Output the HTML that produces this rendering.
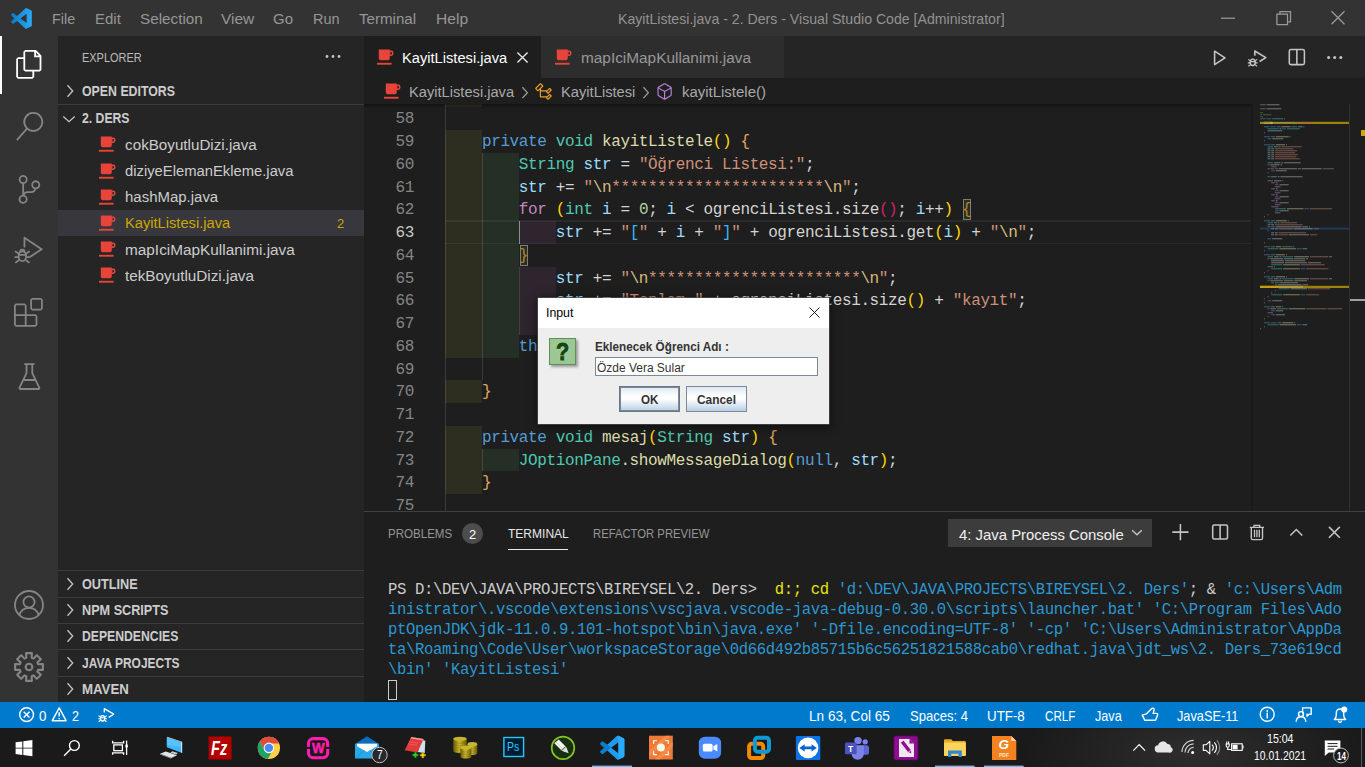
<!DOCTYPE html>
<html lang="tr"><head><meta charset="utf-8"><title>KayitListesi.java - 2. Ders - Visual Studio Code</title>
<style>

html,body{margin:0;padding:0}
body{width:1365px;height:767px;overflow:hidden;background:#1e1e1e;position:relative;font-family:"Liberation Sans",sans-serif}
.t{position:absolute;white-space:pre;transform-origin:0 50%;display:block}
.a{position:absolute}
svg{position:absolute;overflow:visible}
.ln{position:absolute;left:364px;width:888px;height:22.75px}
.c{position:absolute;white-space:pre;font:16px/22.75px "Liberation Mono",monospace;letter-spacing:-0.3716px;color:#d4d4d4;left:445px;margin-top:1px}
.n{position:absolute;white-space:pre;font:16px/22.75px "Liberation Mono",monospace;letter-spacing:-0.3716px;color:#858585;left:388px;width:27.7px;text-align:right;margin-top:1px}
.k{color:#569cd6}.ty{color:#4ec9b0}.f{color:#dcdcaa}.v{color:#9cdcfe}.s{color:#ce9178}.e{color:#d7ba7d}.nu{color:#b5cea8}.kc{color:#c586c0}
.b1{color:#ffd700}.b2{color:#e2a55b}.b3{color:#d0246c}.b4{color:#3cb4f0}.b5{color:#c07c22}
.tm{position:absolute;left:388px;white-space:pre;font:15.6px/20px "Liberation Mono",monospace;letter-spacing:-0.3616px;color:#cccccc}
.tb{color:#2b98d2}.ty2{color:#e5e510}

</style></head>
<body>
<div style="position:absolute;left:0px;top:0px;width:1365px;height:36px;background:#333333;"></div>
<div style="position:absolute;left:0px;top:36px;width:58px;height:666px;background:#333333;"></div>
<div style="position:absolute;left:58px;top:36px;width:306px;height:666px;background:#252526;"></div>
<div style="position:absolute;left:364px;top:36px;width:1001px;height:42px;background:#252526;"></div>
<div style="position:absolute;left:364px;top:36px;width:177.3px;height:42px;background:#1e1e1e;"></div>
<div style="position:absolute;left:541.3px;top:36px;width:243.2px;height:42px;background:#2d2d2d;"></div>
<div style="position:absolute;left:364px;top:78px;width:1001px;height:26px;background:#1e1e1e;"></div>
<div style="position:absolute;left:364px;top:104px;width:1001px;height:407.5px;background:#1e1e1e;"></div>
<div style="position:absolute;left:364px;top:511px;width:1001px;height:191px;background:#1e1e1e;"></div>
<div style="position:absolute;left:364px;top:511px;width:1001px;height:1px;background:#414141;"></div>
<div style="position:absolute;left:0px;top:702px;width:1365px;height:26px;background:#007acc;"></div>
<div style="position:absolute;left:0px;top:728px;width:1365px;height:39px;background:#1a1a1a;background-image:radial-gradient(ellipse 170px 70px at 1195px 24px,rgba(255,255,255,.085),rgba(255,255,255,0) 100%)"></div>
<svg style="left:10.5px;top:7.6px" width="20.8" height="20.8" viewBox="0 0 100 100" ><defs><linearGradient id="vg" x1="0" y1="0" x2="1" y2="0"><stop offset="0" stop-color="#0a7bc8"/><stop offset="1" stop-color="#2aaaf5"/></linearGradient></defs><path fill="url(#vg)" fill-rule="evenodd" d="M70.9 99.3c1.6.6 3.4.6 5-.2l20.6-9.9c2.1-1 3.5-3.2 3.5-5.6V16.4c0-2.4-1.4-4.6-3.5-5.6L75.9.9c-2.1-1-4.5-.8-6.4.6-.3.2-.5.4-.7.6L29.4 38 12.2 25c-1.6-1.2-3.8-1.1-5.3.2l-5.5 5c-1.8 1.7-1.8 4.5 0 6.2L16.2 50 1.4 63.600c-1.8 1.600-1.800 4.500 0 6.100l5.500 5c1.500 1.400 3.700 1.500 5.300.300L29.400 62l39.400 36c.6.600 1.400 1.100 2.100 1.400zM75 27.300 45.100 50 75 72.700V27.300z"/></svg>
<svg style="left:1215px;top:5px" width="140" height="26" viewBox="1215 5 140 26" ><g fill="none" stroke="#9a9a9a" stroke-width="1.25"><path d="M1221 18.2h14"/><path d="M1276.9 14.2h10.6v10.3h-10.6z"/><path d="M1279.9 14.2v-2.700h10.600v10.300h-3"/><path d="M1331.500 11.200l13 13M1344.500 11.200l-13 13"/></g></svg>
<div style="position:absolute;left:0px;top:36px;width:2.4px;height:57.6px;background:#ffffff;"></div>
<svg style="left:15.0px;top:50.3px" width="28.8" height="28.8" viewBox="0 0 24 24" ><path fill="#ffffff" d="M17.5 0h-9L7 1.5V6H2.500L1 7.500v15.070L2.500 24h12.070L16 22.570V18h4.700l1.300-1.430V4.500L17.500 0zm0 2.120l2.380 2.380H17.500V2.120zm-3 20.380h-12v-15H7v9.070L8.500 18h6v4.500zm6-6h-12v-15H16V6h4.500v10.500z"/></svg>
<svg style="left:14.5px;top:112.0px" width="28.8" height="28.8" viewBox="0 0 24 24" ><path fill="#858585" d="M15.250 0a8.250 8.250 0 0 0-6.180 13.720L1 22.880l1.120 1 8.050-9.120A8.251 8.251 0 1 0 15.250.010V0zm0 15a6.750 6.750 0 1 1 0-13.500 6.750 6.750 0 0 1 0 13.500z"/></svg>
<svg style="left:14.6px;top:175.0px" width="28.8" height="28.8" viewBox="0 0 24 24" ><path fill="#858585" d="M21.007 8.222A3.738 3.738 0 0 0 15.045 5.200a3.737 3.737 0 0 0 1.156 6.583 2.988 2.988 0 0 1-2.668 1.670h-2.990a4.456 4.456 0 0 0-2.989 1.165V7.400a3.737 3.737 0 1 0-1.494 0v9.117a3.776 3.776 0 1 0 1.816.099 2.990 2.990 0 0 1 2.668-1.667h2.990a4.484 4.484 0 0 0 4.223-3.039 3.736 3.736 0 0 0 3.250-3.687zM4.565 3.738a2.242 2.242 0 1 1 4.484 0 2.242 2.242 0 0 1-4.484 0zm4.484 16.441a2.242 2.242 0 1 1-4.484 0 2.242 2.242 0 0 1 4.484 0zm8.221-9.715a2.242 2.242 0 1 1 0-4.485 2.242 2.242 0 0 1 0 4.485z"/></svg>
<svg style="left:14.4px;top:234.6px" width="29.5" height="29.5" viewBox="0 0 24 24" ><g fill="none" stroke="#858585" stroke-width="1.45" stroke-linejoin="round" stroke-linecap="round"><path d="M8.500 9.500V2.200L22.500 11.500 13.500 17.500"/><ellipse cx="6.800" cy="17.300" rx="3.100" ry="3.900"/><path d="M3.900 16.200h5.800M1.300 13.500l2.600 1.800M12.300 13.500l-2.600 1.800M1 18h2.700M12.600 18H9.900M1.500 22.300l2.600-1.900M12.100 22.300l-2.600-1.900M5 13.700a1.800 1.800 0 0 1 3.600 0"/></g></svg>
<svg style="left:14.3px;top:298.2px" width="28.8" height="28.8" viewBox="0 0 24 24" ><path fill="#858585" d="M13.500 1.500L15 0h7.500L24 1.500V9l-1.500 1.500H15L13.500 9V1.500zm1.500 0V9h7.500V1.500H15zM0 15V6l1.500-1.500H9L10.500 6v7.500H18l1.500 1.500v7.500L18 24H1.500L0 22.500V15zm9-1.500V6H1.500v7.500H9zM9 15H1.500v7.500H9V15zm1.500 7.500H18V15h-7.500v7.500z"/></svg>
<svg style="left:14.6px;top:361.6px" width="28.8" height="28.8" viewBox="0 0 24 24" ><g fill="none" stroke="#858585" stroke-width="1.5" stroke-linejoin="round"><path d="M7.700 1.700h8.600M9.600 1.700v7.600L3.800 21.300a.8.800 0 0 0 .7 1.200h15a.8.800 0 0 0 .7-1.200L14.400 9.300V1.700M6.900 15h10.200"/></g></svg>
<svg style="left:14px;top:590px" width="30" height="30" viewBox="0 0 30 30" ><g fill="none" stroke="#858585" stroke-width="1.800"><circle cx="15" cy="15" r="14"/><circle cx="15" cy="12" r="5.600"/><path d="M5.400 25.200c1.300-4.600 4.900-7.400 9.600-7.400s8.300 2.800 9.600 7.400"/></g></svg>
<svg style="left:14px;top:652px" width="30" height="30" viewBox="0 0 30 30" ><g fill="none" stroke="#858585" stroke-width="2.100" stroke-linejoin="round"><path d="M12.32 5.78 L12.12 1.10 L17.88 1.10 L17.68 5.78 L19.62 6.59 L22.80 3.13 L26.87 7.20 L23.41 10.38 L24.22 12.32 L28.90 12.12 L28.90 17.88 L24.22 17.68 L23.41 19.62 L26.87 22.80 L22.80 26.87 L19.62 23.41 L17.68 24.22 L17.88 28.90 L12.12 28.90 L12.32 24.22 L10.38 23.41 L7.20 26.87 L3.13 22.80 L6.59 19.62 L5.78 17.68 L1.10 17.88 L1.10 12.12 L5.78 12.32 L6.59 10.38 L3.13 7.20 L7.20 3.13 L10.38 6.59Z"/><circle cx="15" cy="15" r="3.300"/></g></svg>
<svg style="left:325px;top:54px" width="16" height="5" viewBox="0 0 16 5" ><g fill="#c5c5c5"><circle cx="2" cy="2.500" r="1.400"/><circle cx="8" cy="2.500" r="1.400"/><circle cx="14" cy="2.500" r="1.400"/></g></svg>
<svg style="left:66.3px;top:84.0px" width="8.0" height="14.0" viewBox="0 0 8 14" ><path fill="none" stroke="#c5c5c5" stroke-width="1.3" d="M1.500 1.300L6.700 7 1.500 12.700"/></svg>
<div style="position:absolute;left:58px;top:104.4px;width:306px;height:1px;background:#3c3c3c;"></div>
<svg style="left:62.3px;top:114.6px" width="14.0" height="8.0" viewBox="0 0 14 8" ><path fill="none" stroke="#c5c5c5" stroke-width="1.3" d="M1.300 1.500L7 6.700 12.700 1.500"/></svg>
<div style="position:absolute;left:58px;top:210px;width:306px;height:26px;background:#37373d;"></div>
<svg style="left:99.4px;top:136.4px" width="16.5" height="16.2" viewBox="0 0 16.500 16.200" ><g fill="#e8443a"><path d="M1.800 0.500h11v8.200a2.600 2.600 0 0 1-2.600 2.600H4.400a2.600 2.600 0 0 1-2.600-2.600z"/><path fill-rule="evenodd" d="M12.300 1.600h1.900a2.300 2.300 0 0 1 2.300 2.300v.7a2.300 2.300 0 0 1-2.300 2.300h-1.900zM13.400 3v2.500h.6a1 1 0 0 0 1-1V4a1 1 0 0 0-1-1z"/><rect x="0" y="13.800" width="14.600" height="1.900"/></g></svg>
<svg style="left:99.4px;top:162.50000000000003px" width="16.5" height="16.2" viewBox="0 0 16.500 16.200" ><g fill="#e8443a"><path d="M1.800 0.500h11v8.200a2.600 2.600 0 0 1-2.600 2.600H4.400a2.600 2.600 0 0 1-2.600-2.600z"/><path fill-rule="evenodd" d="M12.300 1.600h1.900a2.300 2.300 0 0 1 2.300 2.300v.7a2.300 2.300 0 0 1-2.300 2.300h-1.900zM13.400 3v2.500h.6a1 1 0 0 0 1-1V4a1 1 0 0 0-1-1z"/><rect x="0" y="13.800" width="14.600" height="1.900"/></g></svg>
<svg style="left:99.4px;top:188.70000000000002px" width="16.5" height="16.2" viewBox="0 0 16.500 16.200" ><g fill="#e8443a"><path d="M1.800 0.500h11v8.200a2.600 2.600 0 0 1-2.600 2.600H4.400a2.600 2.600 0 0 1-2.600-2.600z"/><path fill-rule="evenodd" d="M12.300 1.600h1.900a2.300 2.300 0 0 1 2.300 2.300v.7a2.300 2.300 0 0 1-2.300 2.300h-1.900zM13.400 3v2.500h.6a1 1 0 0 0 1-1V4a1 1 0 0 0-1-1z"/><rect x="0" y="13.800" width="14.600" height="1.900"/></g></svg>
<svg style="left:99.4px;top:214.9px" width="16.5" height="16.2" viewBox="0 0 16.500 16.200" ><g fill="#e8443a"><path d="M1.800 0.500h11v8.200a2.600 2.600 0 0 1-2.600 2.600H4.400a2.600 2.600 0 0 1-2.600-2.600z"/><path fill-rule="evenodd" d="M12.300 1.600h1.900a2.300 2.300 0 0 1 2.300 2.300v.7a2.300 2.300 0 0 1-2.300 2.300h-1.900zM13.400 3v2.500h.6a1 1 0 0 0 1-1V4a1 1 0 0 0-1-1z"/><rect x="0" y="13.800" width="14.600" height="1.900"/></g></svg>
<svg style="left:99.4px;top:241.10000000000002px" width="16.5" height="16.2" viewBox="0 0 16.500 16.200" ><g fill="#e8443a"><path d="M1.800 0.500h11v8.200a2.600 2.600 0 0 1-2.600 2.600H4.400a2.600 2.600 0 0 1-2.600-2.600z"/><path fill-rule="evenodd" d="M12.300 1.600h1.900a2.300 2.300 0 0 1 2.300 2.300v.7a2.300 2.300 0 0 1-2.300 2.300h-1.900zM13.400 3v2.500h.6a1 1 0 0 0 1-1V4a1 1 0 0 0-1-1z"/><rect x="0" y="13.800" width="14.600" height="1.900"/></g></svg>
<svg style="left:99.4px;top:267.4px" width="16.5" height="16.2" viewBox="0 0 16.500 16.200" ><g fill="#e8443a"><path d="M1.800 0.500h11v8.200a2.600 2.600 0 0 1-2.600 2.600H4.400a2.600 2.600 0 0 1-2.600-2.600z"/><path fill-rule="evenodd" d="M12.300 1.600h1.900a2.300 2.300 0 0 1 2.300 2.300v.7a2.300 2.300 0 0 1-2.300 2.300h-1.900zM13.400 3v2.500h.6a1 1 0 0 0 1-1V4a1 1 0 0 0-1-1z"/><rect x="0" y="13.800" width="14.600" height="1.900"/></g></svg>
<div style="position:absolute;left:58px;top:570.2px;width:306px;height:1px;background:#3c3c3c;"></div>
<svg style="left:66.3px;top:576.6px" width="8.0" height="14.0" viewBox="0 0 8 14" ><path fill="none" stroke="#c5c5c5" stroke-width="1.3" d="M1.500 1.300L6.700 7 1.500 12.700"/></svg>
<div style="position:absolute;left:58px;top:596.6px;width:306px;height:1px;background:#3c3c3c;"></div>
<svg style="left:66.3px;top:603.0px" width="8.0" height="14.0" viewBox="0 0 8 14" ><path fill="none" stroke="#c5c5c5" stroke-width="1.3" d="M1.500 1.300L6.700 7 1.500 12.700"/></svg>
<div style="position:absolute;left:58px;top:623.0px;width:306px;height:1px;background:#3c3c3c;"></div>
<svg style="left:66.3px;top:629.4px" width="8.0" height="14.0" viewBox="0 0 8 14" ><path fill="none" stroke="#c5c5c5" stroke-width="1.3" d="M1.500 1.300L6.700 7 1.500 12.700"/></svg>
<div style="position:absolute;left:58px;top:649.4000000000001px;width:306px;height:1px;background:#3c3c3c;"></div>
<svg style="left:66.3px;top:655.8000000000001px" width="8.0" height="14.0" viewBox="0 0 8 14" ><path fill="none" stroke="#c5c5c5" stroke-width="1.3" d="M1.500 1.300L6.700 7 1.500 12.700"/></svg>
<div style="position:absolute;left:58px;top:675.8000000000001px;width:306px;height:1px;background:#3c3c3c;"></div>
<svg style="left:66.3px;top:682.2px" width="8.0" height="14.0" viewBox="0 0 8 14" ><path fill="none" stroke="#c5c5c5" stroke-width="1.3" d="M1.500 1.300L6.700 7 1.500 12.700"/></svg>
<svg style="left:377.3px;top:48.8px" width="16.5" height="16.2" viewBox="0 0 16.500 16.200" ><g fill="#e8443a"><path d="M1.800 0.500h11v8.200a2.600 2.600 0 0 1-2.600 2.600H4.400a2.600 2.600 0 0 1-2.600-2.600z"/><path fill-rule="evenodd" d="M12.300 1.600h1.900a2.300 2.300 0 0 1 2.300 2.300v.7a2.300 2.300 0 0 1-2.300 2.300h-1.900zM13.400 3v2.500h.6a1 1 0 0 0 1-1V4a1 1 0 0 0-1-1z"/><rect x="0" y="13.800" width="14.600" height="1.900"/></g></svg>
<svg style="left:516.8px;top:51.6px" width="11" height="11" viewBox="0 0 11 11" ><path fill="none" stroke="#e8e8e8" stroke-width="1.35" d="M0.400 0.400l10.200 10.200M10.600 0.400L0.400 10.600"/></svg>
<svg style="left:555px;top:48.8px" width="16.5" height="16.2" viewBox="0 0 16.500 16.200" ><g fill="#e8443a"><path d="M1.800 0.500h11v8.200a2.600 2.600 0 0 1-2.600 2.600H4.400a2.600 2.600 0 0 1-2.600-2.600z"/><path fill-rule="evenodd" d="M12.300 1.600h1.900a2.300 2.300 0 0 1 2.300 2.300v.7a2.300 2.300 0 0 1-2.300 2.300h-1.900zM13.400 3v2.500h.6a1 1 0 0 0 1-1V4a1 1 0 0 0-1-1z"/><rect x="0" y="13.800" width="14.600" height="1.900"/></g></svg>
<svg style="left:1210px;top:46px" width="140" height="24" viewBox="1210 46 140 24" ><g fill="none" stroke="#c5c5c5" stroke-width="1.550" stroke-linejoin="round"><path d="M1214.600 51.200v13.400l10.400-6.700z"/><path d="M1254.800 55.800v-4.800l11 6.600-6.200 3.900"/><ellipse cx="1252.700" cy="62.300" rx="2.500" ry="3.200" stroke-width="1.400"/><path stroke-width="1.150" d="M1250.200 61.600h5M1248.200 59.400l2.100 1.500M1257.200 59.400l-2.100 1.500M1247.800 62.800h2.500M1257.600 62.800h-2.500M1248.300 66.200l2.200-1.600M1257.100 66.200l-2.200-1.600"/><rect x="1289.300" y="49.500" width="15.100" height="15.100" rx="1.700"/><path d="M1296.850 49.500v15.100"/></g><g fill="#c5c5c5"><circle cx="1328.600" cy="57.600" r="1.500"/><circle cx="1334.700" cy="57.600" r="1.500"/><circle cx="1340.800" cy="57.600" r="1.500"/></g></svg>
<svg style="left:384px;top:83.39999999999999px" width="16.5" height="16.2" viewBox="0 0 16.500 16.200" ><g fill="#e8443a"><path d="M1.800 0.500h11v8.200a2.600 2.600 0 0 1-2.600 2.600H4.400a2.600 2.600 0 0 1-2.600-2.600z"/><path fill-rule="evenodd" d="M12.300 1.600h1.900a2.300 2.300 0 0 1 2.300 2.300v.7a2.300 2.300 0 0 1-2.300 2.300h-1.900zM13.400 3v2.500h.6a1 1 0 0 0 1-1V4a1 1 0 0 0-1-1z"/><rect x="0" y="13.800" width="14.600" height="1.900"/></g></svg>
<svg style="left:521.0px;top:85.55px" width="7.6" height="13.299999999999999" viewBox="0 0 8 14" ><path fill="none" stroke="#a0a0a0" stroke-width="1.3" d="M1.500 1.300L6.700 7 1.500 12.700"/></svg>
<svg style="left:534.0px;top:81.6px" width="19.2" height="19.2" viewBox="0 0 16 16" ><path fill="#ee9d28" d="M11.340 9.710h.710l2.670-2.670v-.710L13.380 5h-.700l-1.820 1.810h-5V5.560l1.860-1.850V3l-2-2H5L1 5v.710l2 2h.710l1.140-1.150v5.790l.500.500H10v.520l1.330 1.340h.710l2.670-2.670v-.710L13.370 10h-.700l-1.860 1.850h-5v-4H10v.480l1.340 1.380zm1.690-3.650l.630.630-2 2-.630-.630 2-2zm0 5l.630.630-2 2-.630-.630 2-2zM3.350 6.650l-1.290-1.290 3.290-3.300 1.300 1.290-3.300 3.300z"/></svg>
<svg style="left:641.6px;top:85.55px" width="7.6" height="13.299999999999999" viewBox="0 0 8 14" ><path fill="none" stroke="#a0a0a0" stroke-width="1.3" d="M1.500 1.300L6.700 7 1.500 12.700"/></svg>
<svg style="left:655.0px;top:81.8px" width="19.2" height="19.2" viewBox="0 0 16 16" ><path fill="#b180d7" d="M13.510 4l-5-3h-1l-5 3-.490.860v6l.490.850 5 3h1l5-3 .490-.850v-6L13.510 4zm-6 9.560l-4.500-2.700V5.700l4.500 2.450v5.410zM3.270 4.700l4.740-2.840 4.740 2.840-4.740 2.590L3.270 4.700zm9.740 6.160l-4.500 2.700V8.150l4.500-2.450v5.160z"/></svg>
<div class="a" style="left:364px;top:104px;width:1001px;height:407px;overflow:hidden">
<div class="a" style="left:81.00px;top:-19.50px;width:37.22px;height:22.95px;background:#2e2e20;"></div>
<div class="a" style="left:81.00px;top:26.00px;width:37.22px;height:22.95px;background:#2e2e20;"></div>
<div class="a" style="left:81.00px;top:48.75px;width:37.22px;height:22.95px;background:#2e2e20;"></div>
<div class="a" style="left:117.92px;top:48.75px;width:37.22px;height:22.95px;background:#252f26;"></div>
<div class="a" style="left:81.00px;top:71.50px;width:37.22px;height:22.95px;background:#2e2e20;"></div>
<div class="a" style="left:117.92px;top:71.50px;width:37.22px;height:22.95px;background:#252f26;"></div>
<div class="a" style="left:81.00px;top:94.25px;width:37.22px;height:22.95px;background:#2e2e20;"></div>
<div class="a" style="left:117.92px;top:94.25px;width:37.22px;height:22.95px;background:#252f26;"></div>
<div class="a" style="left:81.00px;top:117.00px;width:37.22px;height:22.95px;background:#2e2e20;"></div>
<div class="a" style="left:117.92px;top:117.00px;width:37.22px;height:22.95px;background:#252f26;"></div>
<div class="a" style="left:154.84px;top:117.00px;width:37.22px;height:22.95px;background:#2e252e;"></div>
<div class="a" style="left:81.00px;top:139.75px;width:37.22px;height:22.95px;background:#2e2e20;"></div>
<div class="a" style="left:117.92px;top:139.75px;width:37.22px;height:22.95px;background:#252f26;"></div>
<div class="a" style="left:81.00px;top:162.50px;width:37.22px;height:22.95px;background:#2e2e20;"></div>
<div class="a" style="left:117.92px;top:162.50px;width:37.22px;height:22.95px;background:#252f26;"></div>
<div class="a" style="left:154.84px;top:162.50px;width:37.22px;height:22.95px;background:#2e252e;"></div>
<div class="a" style="left:81.00px;top:185.25px;width:37.22px;height:22.95px;background:#2e2e20;"></div>
<div class="a" style="left:117.92px;top:185.25px;width:37.22px;height:22.95px;background:#252f26;"></div>
<div class="a" style="left:154.84px;top:185.25px;width:37.22px;height:22.95px;background:#2e252e;"></div>
<div class="a" style="left:81.00px;top:208.00px;width:37.22px;height:22.95px;background:#2e2e20;"></div>
<div class="a" style="left:117.92px;top:208.00px;width:37.22px;height:22.95px;background:#252f26;"></div>
<div class="a" style="left:154.84px;top:208.00px;width:37.22px;height:22.95px;background:#2e252e;"></div>
<div class="a" style="left:81.00px;top:230.75px;width:37.22px;height:22.95px;background:#2e2e20;"></div>
<div class="a" style="left:117.92px;top:230.75px;width:37.22px;height:22.95px;background:#252f26;"></div>
<div class="a" style="left:81.00px;top:276.25px;width:37.22px;height:22.95px;background:#2e2e20;"></div>
<div class="a" style="left:81.00px;top:321.75px;width:37.22px;height:22.95px;background:#2e2e20;"></div>
<div class="a" style="left:81.00px;top:344.50px;width:37.22px;height:22.95px;background:#2e2e20;"></div>
<div class="a" style="left:117.92px;top:344.50px;width:37.22px;height:22.95px;background:#252f26;"></div>
<div class="a" style="left:81.00px;top:367.25px;width:37.22px;height:22.95px;background:#2e2e20;"></div>
<div class="a" style="left:81.00px;top:0.00px;width:1.00px;height:407.00px;background:rgba(255,255,255,.13);"></div>
<div class="a" style="left:118.00px;top:48.75px;width:1.00px;height:227.50px;background:rgba(255,255,255,.13);"></div>
<div class="a" style="left:118.00px;top:344.50px;width:1.00px;height:22.75px;background:rgba(255,255,255,.13);"></div>
<div class="a" style="left:155.00px;top:117.00px;width:1.20px;height:22.75px;background:#8c8c8c;"></div>
<div class="a" style="left:155.00px;top:162.50px;width:1.00px;height:68.25px;background:rgba(255,255,255,.11);"></div>
<div class="a" style="left:81.00px;top:116.30px;width:807.00px;height:1.30px;background:rgba(255,255,255,.055);"></div>
<div class="a" style="left:81.00px;top:139.05px;width:807.00px;height:1.30px;background:rgba(255,255,255,.055);"></div>
<div class="a" style="left:598.88px;top:95.05px;width:8.23px;height:21.15px;background:#24331f;box-shadow:inset 0 0 0 1px #7d7d7d"></div>
<div class="a" style="left:155.84px;top:140.55px;width:8.23px;height:21.15px;background:#24331f;box-shadow:inset 0 0 0 1px #7d7d7d"></div>
<div class="n" style="left:22.3px;top:3.25px">58</div>
<div class="n" style="left:22.3px;top:26.00px">59</div>
<div class="c" style="left:81px;top:26.00px">    <span class="k">private</span> <span class="ty">void</span> <span class="f">kayitListele</span><span class="b1">()</span> <span class="b2">{</span></div>
<div class="n" style="left:22.3px;top:48.75px">60</div>
<div class="c" style="left:81px;top:48.75px">        <span class="ty">String</span> <span class="v">str</span> = <span class="s">"Öğrenci Listesi:"</span>;</div>
<div class="n" style="left:22.3px;top:71.50px">61</div>
<div class="c" style="left:81px;top:71.50px">        <span class="v">str</span> += <span class="s">"</span><span class="e">\n</span><span class="s">***********************</span><span class="e">\n</span><span class="s">"</span>;</div>
<div class="n" style="left:22.3px;top:94.25px">62</div>
<div class="c" style="left:81px;top:94.25px">        <span class="kc">for</span> <span class="b1">(</span><span class="ty">int</span> <span class="v">i</span> = <span class="nu">0</span>; <span class="v">i</span> &lt; ogrenciListesi.size<span class="b3">()</span>; <span class="v">i</span>++<span class="b1">)</span> <span class="b5">{</span></div>
<div class="n" style="left:22.3px;top:117.00px;color:#c6c6c6">63</div>
<div class="c" style="left:81px;top:117.00px">            <span class="v">str</span> += <span class="s">"</span><span class="b4">[</span><span class="s">"</span> + <span class="v">i</span> + <span class="s">"</span><span class="b4">]</span><span class="s">"</span> + ogrenciListesi.get<span class="b1">(</span><span class="v">i</span><span class="b1">)</span> + <span class="s">"</span><span class="e">\n</span><span class="s">"</span>;</div>
<div class="n" style="left:22.3px;top:139.75px">64</div>
<div class="c" style="left:81px;top:139.75px">        <span class="b5">}</span></div>
<div class="n" style="left:22.3px;top:162.50px">65</div>
<div class="c" style="left:81px;top:162.50px">            <span class="v">str</span> += <span class="s">"</span><span class="e">\n</span><span class="s">***********************</span><span class="e">\n</span><span class="s">"</span>;</div>
<div class="n" style="left:22.3px;top:185.25px">66</div>
<div class="c" style="left:81px;top:185.25px">            <span class="v">str</span> += <span class="s">"Toplam "</span> + ogrenciListesi.size<span class="b1">()</span> + <span class="s">"kayıt"</span>;</div>
<div class="n" style="left:22.3px;top:208.00px">67</div>
<div class="n" style="left:22.3px;top:230.75px">68</div>
<div class="c" style="left:81px;top:230.75px">        <span class="k">this</span>.mesaj<span class="b1">(</span><span class="v">str</span><span class="b1">)</span>;</div>
<div class="n" style="left:22.3px;top:253.50px">69</div>
<div class="n" style="left:22.3px;top:276.25px">70</div>
<div class="c" style="left:81px;top:276.25px">    <span class="b2">}</span></div>
<div class="n" style="left:22.3px;top:299.00px">71</div>
<div class="n" style="left:22.3px;top:321.75px">72</div>
<div class="c" style="left:81px;top:321.75px">    <span class="k">private</span> <span class="ty">void</span> <span class="f">mesaj</span><span class="b1">(</span><span class="ty">String</span> <span class="v">str</span><span class="b1">)</span> <span class="b2">{</span></div>
<div class="n" style="left:22.3px;top:344.50px">73</div>
<div class="c" style="left:81px;top:344.50px">        <span class="ty">JOptionPane</span>.<span class="f">showMessageDialog</span><span class="b1">(</span><span class="k">null</span>, <span class="v">str</span><span class="b1">)</span>;</div>
<div class="n" style="left:22.3px;top:367.25px">74</div>
<div class="c" style="left:81px;top:367.25px">    <span class="b2">}</span></div>
<div class="n" style="left:22.3px;top:390.00px">75</div>
<div class="a" style="left:0;top:0;width:888px;height:5px;background:linear-gradient(#00000066,#00000000)"></div>
</div>
<svg style="left:1250px;top:100px" width="100" height="240" viewBox="1250 100 100 240"><g opacity="0.92"><rect x="1260" y="121.800" width="89" height="2.200" fill="#a88a0a"/><rect x="1263.800" y="121.800" width="9" height="2.200" fill="#f0c40a"/><rect x="1260" y="285.800" width="89" height="2.200" fill="#a88a0a"/><rect x="1260" y="285.800" width="43" height="2.200" fill="#d0aa0c"/><rect x="1260" y="227.600" width="89" height="2.000" fill="#1f3f5f"/></g><g opacity="0.7"><rect x="1260.2" y="104.20" width="5.5" height="1.100" fill="#8e6590"/><rect x="1266.6" y="104.20" width="12.9" height="1.100" fill="#909090"/><rect x="1260.2" y="108.20" width="5.5" height="1.100" fill="#8e6590"/><rect x="1266.6" y="108.20" width="14.7" height="1.100" fill="#909090"/><rect x="1260.2" y="112.20" width="2.8" height="1.100" fill="#4f7a45"/><rect x="1260.2" y="114.20" width="1.8" height="1.100" fill="#4f7a45"/><rect x="1263.0" y="114.20" width="8.3" height="1.100" fill="#4f7a45"/><rect x="1260.2" y="116.20" width="2.8" height="1.100" fill="#4f7a45"/><rect x="1260.2" y="118.20" width="5.5" height="1.100" fill="#3f6f99"/><rect x="1266.6" y="118.20" width="4.6" height="1.100" fill="#3f6f99"/><rect x="1272.2" y="118.20" width="11.0" height="1.100" fill="#3a8f80"/><rect x="1284.1" y="118.20" width="0.9" height="1.100" fill="#909090"/><rect x="1263.9" y="122.20" width="6.4" height="1.100" fill="#3f6f99"/><rect x="1271.2" y="122.20" width="20.2" height="1.100" fill="#909090"/><rect x="1292.4" y="122.20" width="2.8" height="1.100" fill="#909090"/><rect x="1296.1" y="122.20" width="16.6" height="1.100" fill="#94685a"/><rect x="1263.9" y="126.20" width="5.5" height="1.100" fill="#3f6f99"/><rect x="1270.3" y="126.20" width="5.5" height="1.100" fill="#3f6f99"/><rect x="1276.8" y="126.20" width="3.7" height="1.100" fill="#3a8f80"/><rect x="1281.4" y="126.20" width="9.2" height="1.100" fill="#9c9c7c"/><rect x="1291.5" y="126.20" width="5.5" height="1.100" fill="#3a8f80"/><rect x="1297.9" y="126.20" width="4.6" height="1.100" fill="#6d99b0"/><rect x="1303.4" y="126.20" width="0.9" height="1.100" fill="#909090"/><rect x="1267.6" y="128.20" width="11.0" height="1.100" fill="#3a8f80"/><rect x="1279.5" y="128.20" width="1.8" height="1.100" fill="#909090"/><rect x="1282.3" y="128.20" width="3.7" height="1.100" fill="#3f6f99"/><rect x="1286.9" y="128.20" width="12.9" height="1.100" fill="#3a8f80"/><rect x="1267.6" y="130.20" width="14.7" height="1.100" fill="#6d99b0"/><rect x="1263.9" y="132.20" width="0.9" height="1.100" fill="#909090"/><rect x="1263.9" y="136.20" width="6.4" height="1.100" fill="#3f6f99"/><rect x="1271.2" y="136.20" width="3.7" height="1.100" fill="#3a8f80"/><rect x="1275.8" y="136.20" width="12.9" height="1.100" fill="#9c9c7c"/><rect x="1289.6" y="136.20" width="0.9" height="1.100" fill="#909090"/><rect x="1267.6" y="138.20" width="3.7" height="1.100" fill="#3f6f99"/><rect x="1272.2" y="138.20" width="11.0" height="1.100" fill="#909090"/><rect x="1263.9" y="140.20" width="0.9" height="1.100" fill="#909090"/><rect x="1263.9" y="144.20" width="6.4" height="1.100" fill="#3f6f99"/><rect x="1271.2" y="144.20" width="3.7" height="1.100" fill="#3a8f80"/><rect x="1275.8" y="144.20" width="9.2" height="1.100" fill="#9c9c7c"/><rect x="1286.0" y="144.20" width="0.9" height="1.100" fill="#909090"/><rect x="1267.6" y="146.20" width="5.5" height="1.100" fill="#3a8f80"/><rect x="1274.0" y="146.20" width="3.7" height="1.100" fill="#6d99b0"/><rect x="1278.6" y="146.20" width="1.8" height="1.100" fill="#909090"/><rect x="1281.4" y="146.20" width="20.2" height="1.100" fill="#94685a"/><rect x="1267.6" y="148.20" width="2.8" height="1.100" fill="#6d99b0"/><rect x="1271.2" y="148.20" width="2.8" height="1.100" fill="#909090"/><rect x="1274.9" y="148.20" width="18.4" height="1.100" fill="#94685a"/><rect x="1267.6" y="150.20" width="2.8" height="1.100" fill="#6d99b0"/><rect x="1271.2" y="150.20" width="2.8" height="1.100" fill="#909090"/><rect x="1274.9" y="150.20" width="22.1" height="1.100" fill="#94685a"/><rect x="1267.6" y="152.20" width="2.8" height="1.100" fill="#6d99b0"/><rect x="1271.2" y="152.20" width="2.8" height="1.100" fill="#909090"/><rect x="1274.9" y="152.20" width="20.2" height="1.100" fill="#94685a"/><rect x="1267.6" y="154.20" width="2.8" height="1.100" fill="#6d99b0"/><rect x="1271.2" y="154.20" width="2.8" height="1.100" fill="#909090"/><rect x="1274.9" y="154.20" width="23.0" height="1.100" fill="#94685a"/><rect x="1267.6" y="156.20" width="2.8" height="1.100" fill="#6d99b0"/><rect x="1271.2" y="156.20" width="2.8" height="1.100" fill="#909090"/><rect x="1274.9" y="156.20" width="21.2" height="1.100" fill="#94685a"/><rect x="1267.6" y="158.20" width="2.8" height="1.100" fill="#6d99b0"/><rect x="1271.2" y="158.20" width="2.8" height="1.100" fill="#909090"/><rect x="1274.9" y="158.20" width="24.8" height="1.100" fill="#94685a"/><rect x="1267.6" y="162.20" width="5.5" height="1.100" fill="#3a8f80"/><rect x="1274.0" y="162.20" width="6.4" height="1.100" fill="#6d99b0"/><rect x="1281.4" y="162.20" width="1.8" height="1.100" fill="#909090"/><rect x="1284.1" y="162.20" width="16.6" height="1.100" fill="#909090"/><rect x="1267.6" y="164.20" width="1.8" height="1.100" fill="#8e6590"/><rect x="1270.3" y="164.20" width="9.2" height="1.100" fill="#909090"/><rect x="1280.4" y="164.20" width="1.8" height="1.100" fill="#909090"/><rect x="1271.2" y="166.20" width="5.5" height="1.100" fill="#8e6590"/><rect x="1267.6" y="168.20" width="1.8" height="1.100" fill="#909090"/><rect x="1270.3" y="168.20" width="3.7" height="1.100" fill="#8e6590"/><rect x="1274.9" y="168.20" width="2.8" height="1.100" fill="#8e6590"/><rect x="1278.6" y="168.20" width="18.4" height="1.100" fill="#909090"/><rect x="1297.9" y="168.20" width="2.8" height="1.100" fill="#909090"/><rect x="1301.6" y="168.20" width="20.2" height="1.100" fill="#909090"/><rect x="1322.8" y="168.20" width="11.0" height="1.100" fill="#94685a"/><rect x="1271.2" y="170.20" width="3.7" height="1.100" fill="#3f6f99"/><rect x="1275.8" y="170.20" width="11.0" height="1.100" fill="#909090"/><rect x="1267.6" y="172.20" width="0.9" height="1.100" fill="#909090"/><rect x="1267.6" y="176.20" width="2.8" height="1.100" fill="#3a8f80"/><rect x="1271.2" y="176.20" width="5.5" height="1.100" fill="#6d99b0"/><rect x="1277.7" y="176.20" width="1.8" height="1.100" fill="#909090"/><rect x="1280.4" y="176.20" width="22.1" height="1.100" fill="#909090"/><rect x="1267.6" y="180.20" width="5.5" height="1.100" fill="#8e6590"/><rect x="1274.0" y="180.20" width="7.4" height="1.100" fill="#909090"/><rect x="1282.3" y="180.20" width="0.9" height="1.100" fill="#909090"/><rect x="1271.2" y="182.20" width="3.7" height="1.100" fill="#8e6590"/><rect x="1275.8" y="182.20" width="1.8" height="1.100" fill="#909090"/><rect x="1274.9" y="184.20" width="3.7" height="1.100" fill="#3f6f99"/><rect x="1279.5" y="184.20" width="9.2" height="1.100" fill="#909090"/><rect x="1274.9" y="186.20" width="5.5" height="1.100" fill="#8e6590"/><rect x="1271.2" y="188.20" width="3.7" height="1.100" fill="#8e6590"/><rect x="1275.8" y="188.20" width="1.8" height="1.100" fill="#909090"/><rect x="1274.9" y="190.20" width="3.7" height="1.100" fill="#3f6f99"/><rect x="1279.5" y="190.20" width="9.2" height="1.100" fill="#909090"/><rect x="1274.9" y="192.20" width="5.5" height="1.100" fill="#8e6590"/><rect x="1271.2" y="194.20" width="3.7" height="1.100" fill="#8e6590"/><rect x="1275.8" y="194.20" width="1.8" height="1.100" fill="#909090"/><rect x="1274.9" y="196.20" width="3.7" height="1.100" fill="#3f6f99"/><rect x="1279.5" y="196.20" width="9.2" height="1.100" fill="#909090"/><rect x="1274.9" y="198.20" width="5.5" height="1.100" fill="#8e6590"/><rect x="1271.2" y="200.20" width="3.7" height="1.100" fill="#8e6590"/><rect x="1275.8" y="200.20" width="1.8" height="1.100" fill="#909090"/><rect x="1274.9" y="202.20" width="3.7" height="1.100" fill="#3f6f99"/><rect x="1279.5" y="202.20" width="9.2" height="1.100" fill="#909090"/><rect x="1274.9" y="204.20" width="5.5" height="1.100" fill="#8e6590"/><rect x="1271.2" y="206.20" width="7.4" height="1.100" fill="#8e6590"/><rect x="1274.9" y="208.20" width="11.0" height="1.100" fill="#3a8f80"/><rect x="1286.9" y="208.20" width="16.6" height="1.100" fill="#9c9c7c"/><rect x="1304.4" y="208.20" width="4.6" height="1.100" fill="#3f6f99"/><rect x="1309.9" y="208.20" width="22.1" height="1.100" fill="#94685a"/><rect x="1274.9" y="210.20" width="3.7" height="1.100" fill="#3f6f99"/><rect x="1279.5" y="210.20" width="9.2" height="1.100" fill="#909090"/><rect x="1274.9" y="212.20" width="5.5" height="1.100" fill="#8e6590"/><rect x="1267.6" y="214.20" width="0.9" height="1.100" fill="#909090"/><rect x="1263.9" y="216.20" width="0.9" height="1.100" fill="#909090"/><rect x="1263.9" y="220.20" width="6.4" height="1.100" fill="#3f6f99"/><rect x="1271.2" y="220.20" width="3.7" height="1.100" fill="#3a8f80"/><rect x="1275.8" y="220.20" width="11.0" height="1.100" fill="#9c9c7c"/><rect x="1287.8" y="220.20" width="0.9" height="1.100" fill="#909090"/><rect x="1267.6" y="222.20" width="5.5" height="1.100" fill="#3a8f80"/><rect x="1274.0" y="222.20" width="2.8" height="1.100" fill="#6d99b0"/><rect x="1277.7" y="222.20" width="1.8" height="1.100" fill="#909090"/><rect x="1280.4" y="222.20" width="16.6" height="1.100" fill="#94685a"/><rect x="1267.6" y="224.20" width="2.8" height="1.100" fill="#6d99b0"/><rect x="1271.2" y="224.20" width="2.8" height="1.100" fill="#909090"/><rect x="1274.9" y="224.20" width="27.6" height="1.100" fill="#94685a"/><rect x="1267.6" y="226.20" width="2.8" height="1.100" fill="#8e6590"/><rect x="1271.2" y="226.20" width="3.7" height="1.100" fill="#3a8f80"/><rect x="1275.8" y="226.20" width="25.8" height="1.100" fill="#909090"/><rect x="1302.5" y="226.20" width="5.5" height="1.100" fill="#909090"/><rect x="1309.0" y="226.20" width="0.9" height="1.100" fill="#909090"/><rect x="1271.2" y="228.20" width="2.8" height="1.100" fill="#6d99b0"/><rect x="1274.9" y="228.20" width="2.8" height="1.100" fill="#909090"/><rect x="1278.6" y="228.20" width="14.7" height="1.100" fill="#94685a"/><rect x="1294.2" y="228.20" width="18.4" height="1.100" fill="#909090"/><rect x="1313.6" y="228.20" width="5.5" height="1.100" fill="#94685a"/><rect x="1267.6" y="230.20" width="0.9" height="1.100" fill="#909090"/><rect x="1271.2" y="232.20" width="2.8" height="1.100" fill="#6d99b0"/><rect x="1274.9" y="232.20" width="2.8" height="1.100" fill="#909090"/><rect x="1278.6" y="232.20" width="27.6" height="1.100" fill="#94685a"/><rect x="1271.2" y="234.20" width="2.8" height="1.100" fill="#6d99b0"/><rect x="1274.9" y="234.20" width="2.8" height="1.100" fill="#909090"/><rect x="1278.6" y="234.20" width="9.2" height="1.100" fill="#94685a"/><rect x="1288.7" y="234.20" width="20.2" height="1.100" fill="#909090"/><rect x="1309.9" y="234.20" width="7.4" height="1.100" fill="#94685a"/><rect x="1267.6" y="238.20" width="3.7" height="1.100" fill="#3f6f99"/><rect x="1272.2" y="238.20" width="10.1" height="1.100" fill="#909090"/><rect x="1263.9" y="242.20" width="0.9" height="1.100" fill="#909090"/><rect x="1263.9" y="246.20" width="6.4" height="1.100" fill="#3f6f99"/><rect x="1271.2" y="246.20" width="3.7" height="1.100" fill="#3a8f80"/><rect x="1275.8" y="246.20" width="5.5" height="1.100" fill="#9c9c7c"/><rect x="1282.3" y="246.20" width="10.1" height="1.100" fill="#3a8f80"/><rect x="1293.3" y="246.20" width="0.9" height="1.100" fill="#909090"/><rect x="1267.6" y="248.20" width="11.0" height="1.100" fill="#3a8f80"/><rect x="1279.5" y="248.20" width="16.6" height="1.100" fill="#9c9c7c"/><rect x="1297.0" y="248.20" width="4.6" height="1.100" fill="#3f6f99"/><rect x="1302.5" y="248.20" width="4.6" height="1.100" fill="#6d99b0"/><rect x="1263.9" y="250.20" width="0.9" height="1.100" fill="#909090"/><rect x="1263.9" y="254.20" width="6.4" height="1.100" fill="#3f6f99"/><rect x="1271.2" y="254.20" width="3.7" height="1.100" fill="#3a8f80"/><rect x="1275.8" y="254.20" width="9.2" height="1.100" fill="#9c9c7c"/><rect x="1286.0" y="254.20" width="0.9" height="1.100" fill="#909090"/><rect x="1267.6" y="256.20" width="5.5" height="1.100" fill="#3a8f80"/><rect x="1274.0" y="256.20" width="4.6" height="1.100" fill="#6d99b0"/><rect x="1279.5" y="256.20" width="1.8" height="1.100" fill="#909090"/><rect x="1282.3" y="256.20" width="11.0" height="1.100" fill="#3a8f80"/><rect x="1294.2" y="256.20" width="14.7" height="1.100" fill="#9c9c7c"/><rect x="1309.9" y="256.20" width="18.4" height="1.100" fill="#94685a"/><rect x="1329.2" y="256.20" width="2.8" height="1.100" fill="#909090"/><rect x="1267.6" y="258.20" width="1.8" height="1.100" fill="#8e6590"/><rect x="1270.3" y="258.20" width="12.9" height="1.100" fill="#909090"/><rect x="1284.1" y="258.20" width="9.2" height="1.100" fill="#909090"/><rect x="1294.2" y="258.20" width="11.0" height="1.100" fill="#909090"/><rect x="1306.2" y="258.20" width="1.8" height="1.100" fill="#909090"/><rect x="1271.2" y="260.20" width="12.9" height="1.100" fill="#909090"/><rect x="1285.0" y="260.20" width="20.2" height="1.100" fill="#909090"/><rect x="1271.2" y="262.20" width="12.9" height="1.100" fill="#909090"/><rect x="1285.0" y="262.20" width="22.1" height="1.100" fill="#909090"/><rect x="1308.0" y="262.20" width="12.9" height="1.100" fill="#909090"/><rect x="1271.2" y="264.20" width="11.0" height="1.100" fill="#3a8f80"/><rect x="1283.2" y="264.20" width="16.6" height="1.100" fill="#9c9c7c"/><rect x="1300.7" y="264.20" width="23.9" height="1.100" fill="#94685a"/><rect x="1267.6" y="266.20" width="5.5" height="1.100" fill="#8e6590"/><rect x="1274.0" y="266.20" width="0.9" height="1.100" fill="#909090"/><rect x="1271.2" y="268.20" width="11.0" height="1.100" fill="#3a8f80"/><rect x="1283.2" y="268.20" width="16.6" height="1.100" fill="#9c9c7c"/><rect x="1300.7" y="268.20" width="4.6" height="1.100" fill="#3f6f99"/><rect x="1306.2" y="268.20" width="22.1" height="1.100" fill="#94685a"/><rect x="1267.6" y="270.20" width="0.9" height="1.100" fill="#909090"/><rect x="1263.9" y="272.20" width="0.9" height="1.100" fill="#909090"/><rect x="1263.9" y="276.20" width="6.4" height="1.100" fill="#3f6f99"/><rect x="1271.2" y="276.20" width="3.7" height="1.100" fill="#3a8f80"/><rect x="1275.8" y="276.20" width="9.2" height="1.100" fill="#9c9c7c"/><rect x="1286.0" y="276.20" width="0.9" height="1.100" fill="#909090"/><rect x="1267.6" y="278.20" width="5.5" height="1.100" fill="#3a8f80"/><rect x="1274.0" y="278.20" width="4.6" height="1.100" fill="#6d99b0"/><rect x="1279.5" y="278.20" width="1.8" height="1.100" fill="#909090"/><rect x="1282.3" y="278.20" width="11.0" height="1.100" fill="#3a8f80"/><rect x="1294.2" y="278.20" width="14.7" height="1.100" fill="#9c9c7c"/><rect x="1309.9" y="278.20" width="18.4" height="1.100" fill="#94685a"/><rect x="1329.2" y="278.20" width="2.8" height="1.100" fill="#909090"/><rect x="1267.6" y="280.20" width="1.8" height="1.100" fill="#8e6590"/><rect x="1270.3" y="280.20" width="12.9" height="1.100" fill="#909090"/><rect x="1284.1" y="280.20" width="9.2" height="1.100" fill="#909090"/><rect x="1294.2" y="280.20" width="12.9" height="1.100" fill="#909090"/><rect x="1271.2" y="282.20" width="2.8" height="1.100" fill="#8e6590"/><rect x="1274.9" y="282.20" width="3.7" height="1.100" fill="#3a8f80"/><rect x="1279.5" y="282.20" width="18.4" height="1.100" fill="#909090"/><rect x="1274.9" y="284.20" width="1.8" height="1.100" fill="#8e6590"/><rect x="1277.7" y="284.20" width="23.9" height="1.100" fill="#909090"/><rect x="1302.5" y="284.20" width="5.5" height="1.100" fill="#909090"/><rect x="1278.6" y="286.20" width="12.9" height="1.100" fill="#909090"/><rect x="1292.4" y="286.20" width="11.0" height="1.100" fill="#909090"/><rect x="1278.6" y="288.20" width="11.0" height="1.100" fill="#3a8f80"/><rect x="1290.6" y="288.20" width="16.6" height="1.100" fill="#9c9c7c"/><rect x="1308.0" y="288.20" width="22.1" height="1.100" fill="#94685a"/><rect x="1274.9" y="290.20" width="0.9" height="1.100" fill="#909090"/><rect x="1271.2" y="292.20" width="0.9" height="1.100" fill="#909090"/><rect x="1271.2" y="294.20" width="11.0" height="1.100" fill="#3a8f80"/><rect x="1283.2" y="294.20" width="16.6" height="1.100" fill="#9c9c7c"/><rect x="1300.7" y="294.20" width="4.6" height="1.100" fill="#3f6f99"/><rect x="1306.2" y="294.20" width="12.9" height="1.100" fill="#94685a"/><rect x="1267.6" y="296.20" width="0.9" height="1.100" fill="#909090"/><rect x="1263.9" y="298.20" width="0.9" height="1.100" fill="#909090"/><rect x="1267.6" y="300.20" width="3.7" height="1.100" fill="#3f6f99"/><rect x="1272.2" y="300.20" width="10.1" height="1.100" fill="#909090"/><rect x="1263.9" y="302.20" width="0.9" height="1.100" fill="#909090"/><rect x="1263.9" y="306.20" width="6.4" height="1.100" fill="#3f6f99"/><rect x="1271.2" y="306.20" width="3.7" height="1.100" fill="#3a8f80"/><rect x="1275.8" y="306.20" width="5.5" height="1.100" fill="#9c9c7c"/><rect x="1282.3" y="306.20" width="0.9" height="1.100" fill="#909090"/><rect x="1267.6" y="308.20" width="1.8" height="1.100" fill="#8e6590"/><rect x="1270.3" y="308.20" width="5.5" height="1.100" fill="#909090"/><rect x="1276.8" y="308.20" width="11.0" height="1.100" fill="#3a8f80"/><rect x="1288.7" y="308.20" width="16.6" height="1.100" fill="#9c9c7c"/><rect x="1306.2" y="308.20" width="20.2" height="1.100" fill="#94685a"/><rect x="1327.4" y="308.20" width="14.7" height="1.100" fill="#94685a"/><rect x="1271.2" y="310.20" width="3.7" height="1.100" fill="#3f6f99"/><rect x="1275.8" y="310.20" width="7.4" height="1.100" fill="#909090"/><rect x="1267.6" y="312.20" width="5.5" height="1.100" fill="#8e6590"/><rect x="1271.2" y="314.20" width="3.7" height="1.100" fill="#3f6f99"/><rect x="1275.8" y="314.20" width="9.2" height="1.100" fill="#909090"/><rect x="1267.6" y="316.20" width="0.9" height="1.100" fill="#909090"/><rect x="1263.9" y="318.20" width="0.9" height="1.100" fill="#909090"/><rect x="1263.9" y="322.20" width="6.4" height="1.100" fill="#3f6f99"/><rect x="1271.2" y="322.20" width="5.5" height="1.100" fill="#3f6f99"/><rect x="1277.7" y="322.20" width="3.7" height="1.100" fill="#3a8f80"/><rect x="1282.3" y="322.20" width="11.0" height="1.100" fill="#9c9c7c"/><rect x="1294.2" y="322.20" width="0.9" height="1.100" fill="#909090"/><rect x="1267.6" y="324.20" width="11.0" height="1.100" fill="#3a8f80"/><rect x="1279.5" y="324.20" width="16.6" height="1.100" fill="#9c9c7c"/><rect x="1297.0" y="324.20" width="4.6" height="1.100" fill="#3f6f99"/><rect x="1302.5" y="324.20" width="4.6" height="1.100" fill="#6d99b0"/><rect x="1263.9" y="326.20" width="0.9" height="1.100" fill="#909090"/><rect x="1260.2" y="328.20" width="0.9" height="1.100" fill="#909090"/></g></svg>
<div style="position:absolute;left:1251px;top:104px;width:1.5px;height:407px;background:#191919;"></div>
<div style="position:absolute;left:1349px;top:104px;width:1px;height:407px;background:#303031;"></div>
<div style="position:absolute;left:1360.6px;top:129.7px;width:4.4px;height:6.3px;background:#cca700;"></div>
<div style="position:absolute;left:1350px;top:298.8px;width:15px;height:2.6px;background:#a0a0a0;"></div>
<div class="a" style="left:462px;top:523.4px;width:21px;height:21px;border-radius:11px;background:#4d4d4d"></div>
<div style="position:absolute;left:507.6px;top:548.6px;width:60.8px;height:1.2px;background:#e7e7e7;"></div>
<div style="position:absolute;left:948.2px;top:519.3px;width:203.9px;height:27.4px;background:#3c3c3c;"></div>
<svg style="left:1130.55px;top:529.2px" width="11.9" height="6.8" viewBox="0 0 14 8" ><path fill="none" stroke="#c5c5c5" stroke-width="1.7" d="M1.300 1.500L7 6.700 12.700 1.500"/></svg>
<svg style="left:1165px;top:520px" width="185" height="25" viewBox="1165 520 185 25" ><g fill="none" stroke="#c5c5c5" stroke-width="1.550"><path d="M1180.400 524v16.200M1172.300 532.100h16.200"/><rect x="1212.700" y="525" width="14.800" height="14" rx="1.500"/><path d="M1220.100 525v14"/><path d="M1249.800 527.400h14.200M1254.100 527.400v-2h5.600v2M1251.300 527.400v10.800a1.400 1.400 0 0 0 1.400 1.400h8.400a1.400 1.400 0 0 0 1.400-1.400v-10.800" stroke-width="1.400"/><path d="M1254.500 529.800v7.400M1256.900 529.800v7.400M1259.300 529.800v7.400" stroke-width="1.300"/><path d="M1290.300 535.500l6-6 6 6"/><path d="M1329 526.900l10.800 10.800M1339.800 526.900l-10.800 10.800"/></g></svg>
<div class="tm" style="top:579.8px">PS D:\DEV\JAVA\PROJECTS\BIREYSEL\2. Ders&gt;  <span class="ty2">d:; cd</span> <span class="tb">'d:\DEV\JAVA\PROJECTS\BIREYSEL\2. Ders'</span>; &amp; <span class="tb">'c:\Users\Adm</span></div>
<div class="tm" style="top:599.8px"><span class="tb">inistrator\.vscode\extensions\vscjava.vscode-java-debug-0.30.0\scripts\launcher.bat' 'C:\Program Files\Ado</span></div>
<div class="tm" style="top:619.8px"><span class="tb">ptOpenJDK\jdk-11.0.9.101-hotspot\bin\java.exe' '-Dfile.encoding=UTF-8' '-cp' 'C:\Users\Administrator\AppDa</span></div>
<div class="tm" style="top:639.8px"><span class="tb">ta\Roaming\Code\User\workspaceStorage\0d66d492b85715b6c56251821588cab0\redhat.java\jdt_ws\2. Ders_73e619cd</span></div>
<div class="tm" style="top:659.8px"><span class="tb">\bin' 'KayitListesi'</span></div>
<div class="a" style="left:388px;top:680px;width:7.2px;height:18px;border:1px solid #cccccc;box-sizing:content-box"></div>
<svg style="left:15px;top:704px" width="110" height="22" viewBox="15 704 110 22" ><g fill="none" stroke="#ffffff" stroke-width="1.450" stroke-linejoin="round"><circle cx="26.600" cy="714.600" r="6.900"/><path d="M23.700 711.700l5.800 5.800M29.500 711.700l-5.800 5.800"/><path d="M59.200 707.800l6.900 12.900h-13.800z"/><path d="M59.200 712.200v4.400M59.200 717.900v1.300"/><path d="M104.300 712.600v-4l9.400 5.600-5 3.200" stroke-width="1.350"/><ellipse cx="102.600" cy="718.300" rx="2.100" ry="2.700" stroke-width="1.300"/><path stroke-width="1.100" d="M100.500 717.700h4.200M98.600 715.800l1.900 1.300M106.600 715.800l-1.900 1.300M98.300 718.800h2.200M106.900 718.800h-2.200M98.700 721.700l1.900-1.400M106.500 721.700l-1.900-1.400"/></g></svg>
<svg style="left:1138px;top:704px" width="215" height="22" viewBox="1138 704.700 215 22" ><g fill="none" stroke="#ffffff" stroke-width="1.400" stroke-linejoin="round" stroke-linecap="round"><path d="M1142.200 715.900l4.300-1.400 5.300-5.300c1.300-.7 2.600.1 2.300 1.500l-1 3.400h3.500c.8 0 1.300.7 1 1.500l-1.700 4.600c-.2.500-.7.800-1.200.800h-9.800z"/><circle cx="1267.200" cy="715" r="7"/><path d="M1267.200 714v4.600M1267.200 711.100v1.100"/><path d="M1302.600 713.800v-5.200h8.600v6.400h-2.200l-2 2v-2"/><circle cx="1301" cy="714.800" r="2.500"/><path d="M1296.200 722c.3-3 2.200-4.500 4.800-4.500s4.500 1.500 4.800 4.500"/><path d="M1334.300 720.200h11.400c-1.600-1.300-2-2.500-2-4.600v-2.200a3.700 3.700 0 0 0-7.400 0v2.200c0 2.100-.4 3.300-2 4.600zM1338.600 721.800a1.400 1.400 0 0 0 2.800 0"/></g><circle cx="1344.200" cy="710.200" r="3.100" fill="#ffffff"/></svg>
<div class="a" style="left:538px;top:298px;width:291px;height:125.500px;background:#eeeeee;box-shadow:0 0 0 0.6px #5a5a5a,0 2px 9px 1px rgba(0,0,0,.55)"></div>
<div style="position:absolute;left:538px;top:298px;width:291px;height:30px;background:#ffffff;"></div>
<svg style="left:808.5px;top:306.5px" width="11" height="11" viewBox="0 0 11 11" ><path fill="none" stroke="#111" stroke-width="0.950" d="M0.500 0.500l10 10M10.500 0.500l-10 10"/></svg>
<div class="a" style="left:549.3px;top:338px;width:26.600px;height:26.500px;box-sizing:border-box;background:#9cc693;border:1px solid #5e9158;box-shadow:1.500px 2px 2.500px rgba(0,0,0,.35)"></div>
<div class="a" style="left:595.2px;top:357.2px;width:222.800px;height:18.700px;box-sizing:border-box;background:#ffffff;border:1px solid #7a8a99"></div>
<div class="a" style="left:619.3px;top:386.300px;width:60.400px;height:26px;box-sizing:border-box;background:linear-gradient(#dde8f3 0%,#ffffff 38%,#ffffff 50%,#b8cfe5 100%);border:1px solid #6a7886;box-shadow:inset 0 0 0 1px #7a8a99"></div>
<div class="a" style="left:686.3px;top:386.300px;width:60.400px;height:26px;box-sizing:border-box;background:linear-gradient(#dde8f3 0%,#ffffff 38%,#ffffff 50%,#b8cfe5 100%);border:1px solid #7a8a99"></div>
<svg style="left:0;top:728px" width="1365" height="39" viewBox="0 728 1365 39"><g fill="#ffffff"><path d="M15.600 742.300l6.700-.9v6.300h-6.700zM23.300 741.200l9.100-1.300v7.800h-9.100zM15.600 748.600h6.700v6.300l-6.700-.9zM23.300 748.600h9.100v7.700l-9.100-1.300z"/></g><g fill="none" stroke="#ffffff" stroke-width="1.400"><circle cx="74.400" cy="745.500" r="4.900"/><path d="M70.900 749.100l-6.800 6.600"/></g><g fill="none" stroke="#ffffff" stroke-width="1.300"><path d="M112.600 740.800v2h11v-2M112.600 754.800v-2h11v2"/><rect x="113.800" y="744.900" width="8.600" height="5.800"/><path d="M126.600 740.600v14.400"/></g><rect x="125.400" y="744.600" width="2.400" height="2.800" fill="#ffffff"/><g><path d="M166.800 737.300l15.300 5v10.600l-15.300-5.600z" fill="#3fb6fb"/><path d="M166.800 737.300l15.300 5v4.600l-15.300-2z" fill="#6ccbff" opacity=".55"/><path d="M182.100 742.300l-.9-.3v10.300l.9.600z" fill="#e8eef2"/><path d="M166.800 737.300l15.300 5v-.6l-14.800-5z" fill="#cfd6db"/><path d="M172.300 751.200l5.600 1.800-1.600 1.500-6-1.700z" fill="#c6ccd1"/><path d="M160 753.800l5.800-2.200 11.200 3.600-5.800 2.900z" fill="#e3e6e9"/><path d="M160 753.800l11.200 4.300v.7l-11.200-4.300z" fill="#8e979f"/></g><g><rect x="208.800" y="736.600" width="22.600" height="22.800" fill="#b50000" stroke="#8c0000" stroke-width="1.300" stroke-dasharray="1.200 1.100"/></g><defs><clipPath id="chc"><circle cx="268.900" cy="747.900" r="11.100"/></clipPath></defs><g clip-path="url(#chc)"><rect x="255" y="735" width="28" height="26" fill="#fdd048"/><path d="M271.500 752.400L261.500 769.700H240V730.600h13.700l10 17.300z" fill="#1fa463"/><path d="M263.700 747.900L253.700 730.600h37.800v12.800h-20z" fill="#e04a3f"/></g><circle cx="268.900" cy="747.900" r="5.300" fill="#f4f4f4"/><circle cx="268.900" cy="747.900" r="4.200" fill="#4a8af4"/><g fill="none" stroke="#ff1cae" stroke-linejoin="round"><path stroke-width="3.100" d="M313.200 738.600h9.800a4.700 4.700 0 0 1 4.700 4.700v9.800a4.700 4.700 0 0 1-4.700 4.700h-9.800a4.700 4.700 0 0 1-4.700-4.700v-9.800a4.700 4.700 0 0 1 4.700-4.700z"/></g><rect x="306.300" y="746.900" width="4.200" height="2" fill="#1a1a1a"/><rect x="325.700" y="746.900" width="4.200" height="2" fill="#1a1a1a"/><g><path d="M355 744l12-7.800 12 7.800z" fill="#0f6cbd"/><rect x="355" y="743.600" width="24" height="15" rx="1" fill="#29a8ea"/><path d="M357 743.800h20v2.400l-10 5.800-10-5.800z" fill="#ffffff"/><path d="M355 758.600l9.500-8M379 758.600l-9.500-8" stroke="#1b8fd8" stroke-width=".8"/><circle cx="379.500" cy="755" r="7.700" fill="#26282c" stroke="#bdbdbd" stroke-width="1"/></g><g><path d="M420.600 739.600l4.700 1.200-.6 12.400-6.700-1.200z" fill="#cfe0f0"/><path d="M411.200 736.900l12.400 2.100-6.200 13.400-12.700-2.200z" fill="#e03a3a"/><path d="M411.200 736.900l12.400 2.100-.7 1.500-12.400-2.100z" fill="#f29a9a"/><path d="M409 741.500l9 1.500M408 743.800l9 1.500" stroke="#f07a7a" stroke-width=".5"/><path d="M412.600 754h1.800v-1.800h1.900v1.800h1.800v1.900h-1.800v1.800h-1.900v-1.800h-1.800z" fill="#2ed02e" stroke="#0c7a0c" stroke-width=".5"/><path d="M420.100 754.200h1.800v-1.800h1.900v1.800h1.800v1.900h-1.800v1.800h-1.900v-1.800h-1.800z" fill="#f7d716" stroke="#9c8200" stroke-width=".5"/></g><defs><linearGradient id="cg" x1="0" x2="1"><stop offset="0" stop-color="#6e5f06"/><stop offset=".45" stop-color="#cdb92e"/><stop offset="1" stop-color="#6e5f06"/></linearGradient></defs><g><path d="M453.3 738.8v12.2a6.7 2.1 0 0 0 13.4 0v-12.2z" fill="url(#cg)"/><ellipse cx="460" cy="738.8" rx="6.7" ry="2.1" fill="#c9b630"/><path d="M453.3 741.2a6.7 2.1 0 0 0 13.4 0" fill="none" stroke="#5e5006" stroke-width=".4" opacity=".7"/><path d="M453.3 743.6a6.7 2.1 0 0 0 13.4 0" fill="none" stroke="#5e5006" stroke-width=".4" opacity=".7"/><path d="M453.3 746.0a6.7 2.1 0 0 0 13.4 0" fill="none" stroke="#5e5006" stroke-width=".4" opacity=".7"/><path d="M453.3 748.4a6.7 2.1 0 0 0 13.4 0" fill="none" stroke="#5e5006" stroke-width=".4" opacity=".7"/><path d="M453.3 750.8a6.7 2.1 0 0 0 13.4 0" fill="none" stroke="#5e5006" stroke-width=".4" opacity=".7"/><path d="M467.4 744.2v8.8a4.9 2.1 0 0 0 9.8 0v-8.8z" fill="url(#cg)"/><ellipse cx="472.3" cy="744.2" rx="4.9" ry="2.1" fill="#c9b630"/><path d="M467.4 746.6a4.9 2.1 0 0 0 9.8 0" fill="none" stroke="#5e5006" stroke-width=".4" opacity=".7"/><path d="M467.4 749.0a4.9 2.1 0 0 0 9.8 0" fill="none" stroke="#5e5006" stroke-width=".4" opacity=".7"/><path d="M467.4 751.4a4.9 2.1 0 0 0 9.8 0" fill="none" stroke="#5e5006" stroke-width=".4" opacity=".7"/><path d="M460.5 747.6v8.8a5.4 2.1 0 0 0 10.8 0v-8.8z" fill="url(#cg)"/><ellipse cx="465.9" cy="747.6" rx="5.4" ry="2.1" fill="#c9b630"/><path d="M460.5 750.0a5.4 2.1 0 0 0 10.8 0" fill="none" stroke="#5e5006" stroke-width=".4" opacity=".7"/><path d="M460.5 752.4a5.4 2.1 0 0 0 10.8 0" fill="none" stroke="#5e5006" stroke-width=".4" opacity=".7"/><path d="M460.5 754.8a5.4 2.1 0 0 0 10.8 0" fill="none" stroke="#5e5006" stroke-width=".4" opacity=".7"/></g><rect x="503.900" y="737.500" width="19.700" height="19" fill="#001d33" stroke="#26c9ff" stroke-width="1.400"/><g><circle cx="563" cy="747.900" r="11.300" fill="#16300f" stroke="#84c422" stroke-width="1.700"/><path d="M554.300 743.300l4.400-3.800 7.700 7.800-4.300 3.700z" fill="#f4f4f4"/><path d="M562.100 751l4.300-3.700 2.300 5.900z" fill="#dedede"/><path d="M561.300 750.300l4.400-3.800" stroke="#16300f" stroke-width=".8"/><path d="M556 742.200l7.300 7.400" stroke="#bdbdbd" stroke-width=".7"/></g><g transform="translate(600.200 735.600) scale(0.242)"><path fill="#1f9cf0" fill-rule="evenodd" d="M70.9 99.3c1.6.6 3.4.6 5-.2l20.6-9.9c2.1-1 3.5-3.2 3.5-5.6V16.4c0-2.4-1.4-4.6-3.5-5.6L75.9.9c-2.1-1-4.5-.8-6.4.6-.3.2-.5.4-.7.6L29.4 38 12.2 25c-1.6-1.2-3.8-1.1-5.3.2l-5.5 5c-1.8 1.7-1.8 4.5 0 6.2L16.2 50 1.4 63.600c-1.8 1.600-1.800 4.500 0 6.100l5.500 5c1.500 1.400 3.700 1.500 5.300.300L29.400 62l39.400 36c.6.600 1.400 1.100 2.100 1.400zM75 27.300 45.100 50 75 72.700V27.300z"/><path fill="#0065a9" d="M29.400 38 12.200 25c-1.600-1.200-3.800-1.100-5.300.2l-5.500 5c-1.800 1.700-1.800 4.500 0 6.200L16.200 50 1.400 63.600c-1.800 1.600-1.800 4.500 0 6.100l5.500 5c1.500 1.400 3.700 1.500 5.300.3L29.400 62 45.100 50z" opacity=".55"/><path fill="#2fb0ff" d="M75 0.500c.3 0 .6.200.9.400l20.600 9.900c2.100 1 3.500 3.200 3.500 5.600v67.200c0 2.400-1.400 4.600-3.500 5.600l-20.600 9.900c-.3.100-.6.300-.9.300z" opacity=".75"/></g><rect x="592" y="765.600" width="40" height="1.400" fill="#76b9ed"/><g><rect x="649" y="735.700" width="23.800" height="23.800" fill="#ef7a35"/><path d="M649 752l16.300-16.300h5L649 757zM655 759.500l17.800-17.800v5L660 759.500z" fill="#f59a5c" opacity=".55"/><circle cx="660.900" cy="747.600" r="4" fill="#f2ffe8"/><path d="M653.600 744v-3.300h3.300M665 740.700h3.300v3.300M668.300 751.300v3.300H665M656.900 754.600h-3.300v-3.300" fill="none" stroke="#ffffff" stroke-width="1.100"/></g><g><rect x="698.800" y="736.800" width="22.300" height="22" rx="6.200" fill="#4a8cff"/><rect x="702.800" y="743.800" width="9.800" height="7.800" rx="1.700" fill="#ffffff"/><path d="M713.400 746.300l3.900-2.400v7.700l-3.900-2.400z" fill="#ffffff"/></g><g fill="none" stroke-width="4"><rect x="749.100" y="743.800" width="14.100" height="14.200" rx="2.600" stroke="#f38b00"/><rect x="754.900" y="737.800" width="14.100" height="13.900" rx="2.600" stroke="#0f9ad6"/></g><g><rect x="795.900" y="735.900" width="24.400" height="24" rx="1" fill="#0b73e6"/><circle cx="808.100" cy="747.900" r="10.300" fill="#ffffff"/><path d="M799.300 747.900l5.400-3.600v2.300h6.800v-2.300l5.400 3.600-5.400 3.600v-2.300h-6.800v2.300z" fill="#0b63cf"/></g><g><circle cx="865.200" cy="741.800" r="2.600" fill="#7b83eb"/><rect x="861.500" y="745.200" width="7.500" height="9.500" rx="2.500" fill="#5d66d6"/><circle cx="858" cy="740.600" r="3.700" fill="#7b83eb"/><path d="M851.500 745.200h12.400v8.300a6.200 6.200 0 0 1-12.400 0z" fill="#7b83eb"/><rect x="845" y="742.600" width="11.600" height="11.600" rx="1.300" fill="#4b53bc"/></g><g><rect x="893.900" y="736" width="24.100" height="24" rx="2" fill="#8d0e8f" stroke="#5b065c" stroke-width=".8"/><path d="M899 739h10.500l4.500 4.500V757h-15z" fill="#efe6ef"/><path d="M909.500 739v4.500h4.500z" fill="#8d0e8f"/><path d="M900.300 742.600l3.300-2.400 7.600 9.700.5 4-3.800-1.500z" fill="#8d0e8f" stroke="#f6eef6" stroke-width=".8"/><path d="M908.100 752.300l3.200-2.300" stroke="#f6eef6" stroke-width=".7"/></g><g><path d="M944 740.300a1 1 0 0 1 1-1h6.200l1.600 1.800h12a1 1 0 0 1 1 1v13.700h-21.800z" fill="#e8a920"/><rect x="944" y="742.600" width="21.800" height="13.300" rx=".8" fill="#fbd45e"/><path d="M948 750.500h13.800v6.400h-3.300v-3.200h-7.200v3.200H948z" fill="#2f86d6"/></g><rect x="935" y="765.600" width="39.600" height="1.400" fill="#76b9ed"/><g><path d="M992 736h19.300l5 5V760H992z" fill="#f58220"/><path d="M1011.300 736v5h5z" fill="#ffd2a6"/></g><rect x="984" y="765.600" width="39.600" height="1.400" fill="#76b9ed"/><g fill="none" stroke="#ffffff" stroke-width="1.200"><path d="M1133.300 750.600l5.900-5.900 5.900 5.900"/></g><path d="M1158.500 752.500a3.600 3.600 0 0 1-.4-7.200 5 5 0 0 1 9.300-1.300 3.200 3.200 0 0 1 3.500 3.200 2.700 2.700 0 0 1-2.400 5.300z" fill="#e6e6e6"/><g fill="none" stroke="#d8d8d8" stroke-width="1.100"><path d="M1182 752a11.600 11.600 0 0 1 11.600-11.600M1185 752.500a8.600 8.600 0 0 1 8.600-8.600M1188 753a5.600 5.600 0 0 1 5.600-5.600"/></g><circle cx="1192.600" cy="752.600" r="1.500" fill="#ffffff"/><g fill="none" stroke="#ffffff" stroke-width="1.100" stroke-linejoin="round"><path d="M1203.300 744.800h2.700l3.800-3.400v12.400l-3.800-3.400h-2.700z"/><path d="M1212 744.600a4 4 0 0 1 0 6M1214.300 742.400a7.300 7.300 0 0 1 0 10.400" /><path d="M1216.800 740.400a10.400 10.400 0 0 1 0 14.400" opacity=".45"/></g><g fill="none" stroke="#ffffff" stroke-width="1.100"><rect x="1231.600" y="743.800" width="10.600" height="6.600"/><path d="M1243 745.600v3"/><path d="M1228.600 741.600v2.400M1226.800 741.600v2.400M1226.200 744h3v1.800a1.500 1.500 0 0 1-3 0zM1227.700 747.300v2.200h3.500"/></g><rect x="1232.600" y="744.800" width="5" height="4.600" fill="#ffffff"/><path d="M1324.800 740.400h15.600v12h-11.600l-4 3.600z" fill="#ffffff"/><path d="M1327.600 743.600h10M1327.600 746.300h10M1327.600 749h6.600" stroke="#1c1c1c" stroke-width="1"/><circle cx="1341" cy="755.500" r="7.400" fill="#1c1c1c" stroke="#bdbdbd" stroke-width="1"/><rect x="1361" y="728" width="1" height="39" fill="#5a5a5a"/></svg>
<span class="t" style="left:51.80px;top:11.17px;font:400 15.2px/15.2px 'Liberation Sans', sans-serif;color:#969696;transform:scaleX(0.9516);">File</span>
<span class="t" style="left:94.60px;top:11.17px;font:400 15.2px/15.2px 'Liberation Sans', sans-serif;color:#969696;transform:scaleX(0.9858);">Edit</span>
<span class="t" style="left:139.50px;top:11.17px;font:400 15.2px/15.2px 'Liberation Sans', sans-serif;color:#969696;transform:scaleX(1.0051);">Selection</span>
<span class="t" style="left:221.30px;top:11.17px;font:400 15.2px/15.2px 'Liberation Sans', sans-serif;color:#969696;transform:scaleX(1.0197);">View</span>
<span class="t" style="left:273.40px;top:11.17px;font:400 15.2px/15.2px 'Liberation Sans', sans-serif;color:#969696;transform:scaleX(0.9869);">Go</span>
<span class="t" style="left:313.00px;top:11.17px;font:400 15.2px/15.2px 'Liberation Sans', sans-serif;color:#969696;transform:scaleX(0.9507);">Run</span>
<span class="t" style="left:359.00px;top:11.17px;font:400 15.2px/15.2px 'Liberation Sans', sans-serif;color:#969696;transform:scaleX(0.9949);">Terminal</span>
<span class="t" style="left:436.10px;top:11.17px;font:400 15.2px/15.2px 'Liberation Sans', sans-serif;color:#969696;transform:scaleX(1.0272);">Help</span>
<span class="t" style="left:618.40px;top:12.17px;font:400 14.4px/14.4px 'Liberation Sans', sans-serif;color:#929292;transform:scaleX(0.9811);">KayitListesi.java - 2. Ders - Visual Studio Code [Administrator]</span>
<span class="t" style="left:81.70px;top:50.85px;font:400 13.0px/13.0px 'Liberation Sans', sans-serif;color:#bbbbbb;transform:scaleX(0.8431);">EXPLORER</span>
<span class="t" style="left:81.70px;top:83.96px;font:700 14.2px/14.2px 'Liberation Sans', sans-serif;color:#cccccc;transform:scaleX(0.8694);">OPEN EDITORS</span>
<span class="t" style="left:81.70px;top:110.96px;font:700 14.2px/14.2px 'Liberation Sans', sans-serif;color:#cccccc;transform:scaleX(0.8605);">2. DERS</span>
<span class="t" style="left:125.10px;top:136.97px;font:400 15.2px/15.2px 'Liberation Sans', sans-serif;color:#cccccc;">cokBoyutluDizi.java</span>
<span class="t" style="left:125.10px;top:163.07px;font:400 15.2px/15.2px 'Liberation Sans', sans-serif;color:#cccccc;transform:scaleX(0.9736);">diziyeElemanEkleme.java</span>
<span class="t" style="left:125.10px;top:189.27px;font:400 15.2px/15.2px 'Liberation Sans', sans-serif;color:#cccccc;transform:scaleX(0.9856);">hashMap.java</span>
<span class="t" style="left:125.10px;top:215.47px;font:400 15.2px/15.2px 'Liberation Sans', sans-serif;color:#cca700;transform:scaleX(0.9660);">KayitListesi.java</span>
<span class="t" style="left:125.10px;top:241.67px;font:400 15.2px/15.2px 'Liberation Sans', sans-serif;color:#cccccc;transform:scaleX(1.0108);">mapIciMapKullanimi.java</span>
<span class="t" style="left:125.10px;top:267.97px;font:400 15.2px/15.2px 'Liberation Sans', sans-serif;color:#cccccc;transform:scaleX(1.0054);">tekBoyutluDizi.java</span>
<span class="t" style="left:336.60px;top:216.95px;font:400 13.4px/13.4px 'Liberation Sans', sans-serif;color:#cca700;transform:scaleX(0.9660);">2</span>
<span class="t" style="left:81.70px;top:576.56px;font:700 14.2px/14.2px 'Liberation Sans', sans-serif;color:#cccccc;transform:scaleX(0.8946);">OUTLINE</span>
<span class="t" style="left:81.70px;top:602.96px;font:700 14.2px/14.2px 'Liberation Sans', sans-serif;color:#cccccc;transform:scaleX(0.8920);">NPM SCRIPTS</span>
<span class="t" style="left:81.70px;top:629.36px;font:700 14.2px/14.2px 'Liberation Sans', sans-serif;color:#cccccc;transform:scaleX(0.8602);">DEPENDENCIES</span>
<span class="t" style="left:81.70px;top:655.76px;font:700 14.2px/14.2px 'Liberation Sans', sans-serif;color:#cccccc;transform:scaleX(0.8424);">JAVA PROJECTS</span>
<span class="t" style="left:81.70px;top:682.16px;font:700 14.2px/14.2px 'Liberation Sans', sans-serif;color:#cccccc;transform:scaleX(0.9325);">MAVEN</span>
<span class="t" style="left:402.30px;top:49.57px;font:400 15.2px/15.2px 'Liberation Sans', sans-serif;color:#ffffff;transform:scaleX(0.9660);">KayitListesi.java</span>
<span class="t" style="left:580.90px;top:49.57px;font:400 15.2px/15.2px 'Liberation Sans', sans-serif;color:#989898;transform:scaleX(1.0120);">mapIciMapKullanimi.java</span>
<span class="t" style="left:409.40px;top:84.17px;font:400 15.2px/15.2px 'Liberation Sans', sans-serif;color:#a9a9a9;transform:scaleX(0.9651);">KayitListesi.java</span>
<span class="t" style="left:560.80px;top:84.17px;font:400 15.2px/15.2px 'Liberation Sans', sans-serif;color:#a9a9a9;transform:scaleX(0.9684);">KayitListesi</span>
<span class="t" style="left:682.00px;top:84.17px;font:400 15.2px/15.2px 'Liberation Sans', sans-serif;color:#a9a9a9;transform:scaleX(0.9842);">kayitListele()</span>
<span class="t" style="left:387.80px;top:527.25px;font:400 13.0px/13.0px 'Liberation Sans', sans-serif;color:#969696;transform:scaleX(0.8886);">PROBLEMS</span>
<span class="t" style="left:469.00px;top:527.55px;font:400 13.2px/13.2px 'Liberation Sans', sans-serif;color:#ffffff;transform:scaleX(0.9804);">2</span>
<span class="t" style="left:507.60px;top:527.25px;font:400 13.0px/13.0px 'Liberation Sans', sans-serif;color:#e7e7e7;transform:scaleX(0.9249);">TERMINAL</span>
<span class="t" style="left:593.00px;top:527.25px;font:400 13.0px/13.0px 'Liberation Sans', sans-serif;color:#969696;transform:scaleX(0.8678);">REFACTOR PREVIEW</span>
<span class="t" style="left:958.70px;top:526.97px;font:400 15.0px/15.0px 'Liberation Sans', sans-serif;color:#f0f0f0;transform:scaleX(0.9926);">4: Java Process Console</span>
<span class="t" style="left:39.00px;top:708.66px;font:400 14.2px/14.2px 'Liberation Sans', sans-serif;color:#ffffff;transform:scaleX(0.9378);">0</span>
<span class="t" style="left:72.00px;top:708.66px;font:400 14.2px/14.2px 'Liberation Sans', sans-serif;color:#ffffff;transform:scaleX(0.8871);">2</span>
<span class="t" style="left:808.70px;top:708.77px;font:400 14.4px/14.4px 'Liberation Sans', sans-serif;color:#ffffff;transform:scaleX(0.9450);">Ln 63, Col 65</span>
<span class="t" style="left:909.50px;top:708.77px;font:400 14.4px/14.4px 'Liberation Sans', sans-serif;color:#ffffff;transform:scaleX(0.9062);">Spaces: 4</span>
<span class="t" style="left:987.00px;top:708.77px;font:400 14.4px/14.4px 'Liberation Sans', sans-serif;color:#ffffff;transform:scaleX(0.9269);">UTF-8</span>
<span class="t" style="left:1044.70px;top:708.77px;font:400 14.4px/14.4px 'Liberation Sans', sans-serif;color:#ffffff;transform:scaleX(0.8113);">CRLF</span>
<span class="t" style="left:1094.80px;top:708.77px;font:400 14.4px/14.4px 'Liberation Sans', sans-serif;color:#ffffff;transform:scaleX(0.8781);">Java</span>
<span class="t" style="left:1176.80px;top:708.77px;font:400 14.4px/14.4px 'Liberation Sans', sans-serif;color:#ffffff;transform:scaleX(0.8856);">JavaSE-11</span>
<span class="t" style="left:546.40px;top:307.15px;font:400 12.8px/12.8px 'Liberation Sans', sans-serif;color:#000000;transform:scaleX(0.9625);">Input</span>
<span class="t" style="left:556.00px;top:341.12px;font:700 23.5px/23.5px 'Liberation Sans', sans-serif;color:#0c4a0c;transform:scaleX(0.9193);-webkit-text-stroke:1px #0c4a0c;text-shadow:0 0 1.500px #e4f8dc,0 0 1.500px #e4f8dc,0 0 1px #e4f8dc">?</span>
<span class="t" style="left:595.40px;top:340.94px;font:700 12.2px/12.2px 'Liberation Sans', sans-serif;color:#333333;transform:scaleX(0.9619);">Eklenecek Öğrenci Adı :</span>
<span class="t" style="left:597.20px;top:361.74px;font:400 12.0px/12.0px 'Liberation Sans', sans-serif;color:#333333;transform:scaleX(0.9970);">Özde Vera Sular</span>
<span class="t" style="left:640.80px;top:394.24px;font:700 12.2px/12.2px 'Liberation Sans', sans-serif;color:#333333;transform:scaleX(0.9518);">OK</span>
<span class="t" style="left:697.00px;top:394.24px;font:700 12.2px/12.2px 'Liberation Sans', sans-serif;color:#333333;transform:scaleX(0.9758);">Cancel</span>
<span class="t" style="left:211.40px;top:737.59px;font:700 20.5px/20.5px 'Liberation Sans', sans-serif;color:#ffffff;transform:scaleX(0.7111);font-style:italic">Fz</span>
<span class="t" style="left:311.80px;top:739.73px;font:700 15.5px/15.5px 'Liberation Sans', sans-serif;color:#ff1cae;transform:scaleX(0.8606);-webkit-text-stroke:0.6px #ff1cae">W</span>
<span class="t" style="left:998.60px;top:738.41px;font:700 13.5px/13.5px 'Liberation Sans', sans-serif;color:#ffffff;font-style:italic">G</span>
<span class="t" style="left:507.40px;top:740.25px;font:400 13.4px/13.4px 'Liberation Sans', sans-serif;color:#2bc8ff;transform:scaleX(0.7800);">Ps</span>
<span class="t" style="left:376.80px;top:749.04px;font:400 12px/12px 'Liberation Sans', sans-serif;color:#ffffff;transform:scaleX(0.8374);">7</span>
<span class="t" style="left:999.20px;top:753.06px;font:700 5.2px/5.2px 'Liberation Sans', sans-serif;color:#ffe6cc;transform:scaleX(0.9639);">PDF</span>
<span class="t" style="left:848.30px;top:743.86px;font:700 9.5px/9.5px 'Liberation Sans', sans-serif;color:#ffffff;transform:scaleX(0.8946);">T</span>
<span class="t" style="left:1266.50px;top:733.04px;font:400 12.2px/12.2px 'Liberation Sans', sans-serif;color:#ffffff;transform:scaleX(0.8689);">15:04</span>
<span class="t" style="left:1253.60px;top:750.04px;font:400 12.2px/12.2px 'Liberation Sans', sans-serif;color:#ffffff;transform:scaleX(0.8525);">10.01.2021</span>
<span class="t" style="left:1336.60px;top:750.57px;font:700 10.5px/10.5px 'Liberation Sans', sans-serif;color:#ffffff;transform:scaleX(0.7701);">14</span>
</body></html>
